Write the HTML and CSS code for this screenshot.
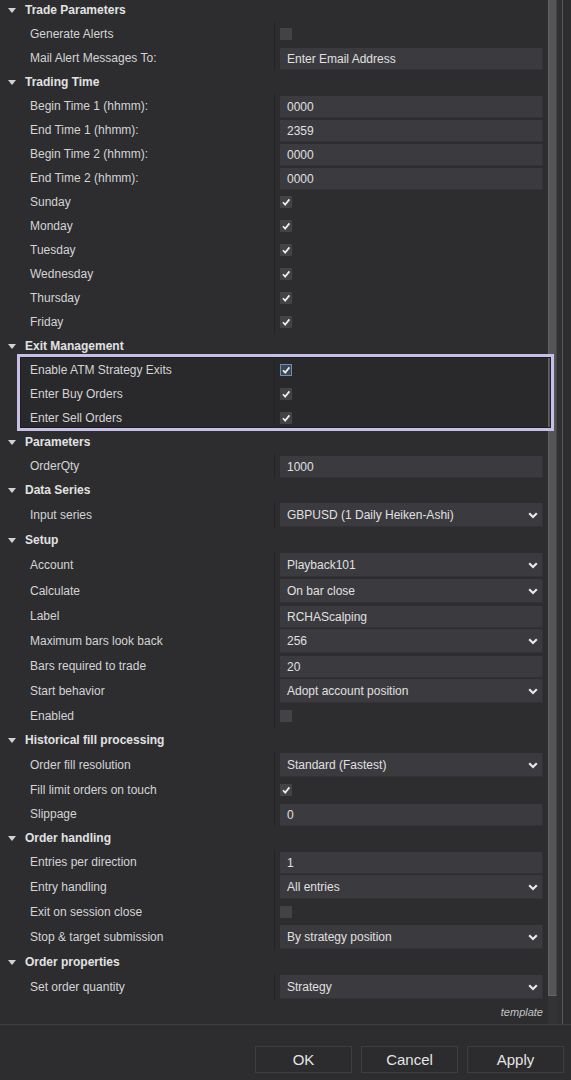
FILE: index.html
```html
<!DOCTYPE html>
<html>
<head>
<meta charset="utf-8">
<link rel="stylesheet" href="styles.css">
</head>
<body>
<div class="window">
  <div class="main">
    <div class="content">
      <div class="list">
        <div class="hdr"><span class="tri"></span>Trade Parameters</div>
        <div class="row"><div class="lbl">Generate Alerts</div><div class="val"><span class="cb"></span></div></div>
        <div class="row"><div class="lbl">Mail Alert Messages To:</div><div class="val"><div class="inp">Enter Email Address</div></div></div>

        <div class="hdr"><span class="tri"></span>Trading Time</div>
        <div class="row"><div class="lbl">Begin Time 1 (hhmm):</div><div class="val"><div class="inp">0000</div></div></div>
        <div class="row"><div class="lbl">End Time 1 (hhmm):</div><div class="val"><div class="inp">2359</div></div></div>
        <div class="row"><div class="lbl">Begin Time 2 (hhmm):</div><div class="val"><div class="inp">0000</div></div></div>
        <div class="row"><div class="lbl">End Time 2 (hhmm):</div><div class="val"><div class="inp">0000</div></div></div>
        <div class="row"><div class="lbl">Sunday</div><div class="val"><span class="cb"><svg viewBox="0 0 12 12"><path d="M3 6.2 L5.2 8.6 L9.4 3.4"/></svg></span></div></div>
        <div class="row"><div class="lbl">Monday</div><div class="val"><span class="cb"><svg viewBox="0 0 12 12"><path d="M3 6.2 L5.2 8.6 L9.4 3.4"/></svg></span></div></div>
        <div class="row"><div class="lbl">Tuesday</div><div class="val"><span class="cb"><svg viewBox="0 0 12 12"><path d="M3 6.2 L5.2 8.6 L9.4 3.4"/></svg></span></div></div>
        <div class="row"><div class="lbl">Wednesday</div><div class="val"><span class="cb"><svg viewBox="0 0 12 12"><path d="M3 6.2 L5.2 8.6 L9.4 3.4"/></svg></span></div></div>
        <div class="row"><div class="lbl">Thursday</div><div class="val"><span class="cb"><svg viewBox="0 0 12 12"><path d="M3 6.2 L5.2 8.6 L9.4 3.4"/></svg></span></div></div>
        <div class="row"><div class="lbl">Friday</div><div class="val"><span class="cb"><svg viewBox="0 0 12 12"><path d="M3 6.2 L5.2 8.6 L9.4 3.4"/></svg></span></div></div>

        <div class="hdr"><span class="tri"></span>Exit Management</div>
        <div class="highlight">
          <div class="row"><div class="lbl">Enable ATM Strategy Exits</div><div class="val"><span class="cb focus"><svg viewBox="0 0 12 12"><path d="M3 6.2 L5.2 8.6 L9.4 3.4"/></svg></span></div></div>
          <div class="row"><div class="lbl">Enter Buy Orders</div><div class="val"><span class="cb"><svg viewBox="0 0 12 12"><path d="M3 6.2 L5.2 8.6 L9.4 3.4"/></svg></span></div></div>
          <div class="row"><div class="lbl">Enter Sell Orders</div><div class="val"><span class="cb"><svg viewBox="0 0 12 12"><path d="M3 6.2 L5.2 8.6 L9.4 3.4"/></svg></span></div></div>
        </div>

        <div class="hdr"><span class="tri"></span>Parameters</div>
        <div class="row"><div class="lbl">OrderQty</div><div class="val"><div class="inp">1000</div></div></div>

        <div class="hdr"><span class="tri"></span>Data Series</div>
        <div class="row dd"><div class="lbl">Input series</div><div class="val"><div class="inp sel"><span>GBPUSD (1 Daily Heiken-Ashi)</span><svg class="chev" viewBox="0 0 10 7"><path d="M1.2 1.2 L5 5 L8.8 1.2"/></svg></div></div></div>

        <div class="hdr"><span class="tri"></span>Setup</div>
        <div class="row dd"><div class="lbl">Account</div><div class="val"><div class="inp sel"><span>Playback101</span><svg class="chev" viewBox="0 0 10 7"><path d="M1.2 1.2 L5 5 L8.8 1.2"/></svg></div></div></div>
        <div class="row dd"><div class="lbl">Calculate</div><div class="val"><div class="inp sel"><span>On bar close</span><svg class="chev" viewBox="0 0 10 7"><path d="M1.2 1.2 L5 5 L8.8 1.2"/></svg></div></div></div>
        <div class="row"><div class="lbl">Label</div><div class="val"><div class="inp">RCHAScalping</div></div></div>
        <div class="row dd"><div class="lbl">Maximum bars look back</div><div class="val"><div class="inp sel"><span>256</span><svg class="chev" viewBox="0 0 10 7"><path d="M1.2 1.2 L5 5 L8.8 1.2"/></svg></div></div></div>
        <div class="row"><div class="lbl">Bars required to trade</div><div class="val"><div class="inp">20</div></div></div>
        <div class="row dd"><div class="lbl">Start behavior</div><div class="val"><div class="inp sel"><span>Adopt account position</span><svg class="chev" viewBox="0 0 10 7"><path d="M1.2 1.2 L5 5 L8.8 1.2"/></svg></div></div></div>
        <div class="row"><div class="lbl">Enabled</div><div class="val"><span class="cb"></span></div></div>

        <div class="hdr"><span class="tri"></span>Historical fill processing</div>
        <div class="row dd"><div class="lbl">Order fill resolution</div><div class="val"><div class="inp sel"><span>Standard (Fastest)</span><svg class="chev" viewBox="0 0 10 7"><path d="M1.2 1.2 L5 5 L8.8 1.2"/></svg></div></div></div>
        <div class="row"><div class="lbl">Fill limit orders on touch</div><div class="val"><span class="cb"><svg viewBox="0 0 12 12"><path d="M3 6.2 L5.2 8.6 L9.4 3.4"/></svg></span></div></div>
        <div class="row"><div class="lbl">Slippage</div><div class="val"><div class="inp">0</div></div></div>

        <div class="hdr"><span class="tri"></span>Order handling</div>
        <div class="row"><div class="lbl">Entries per direction</div><div class="val"><div class="inp">1</div></div></div>
        <div class="row dd"><div class="lbl">Entry handling</div><div class="val"><div class="inp sel"><span>All entries</span><svg class="chev" viewBox="0 0 10 7"><path d="M1.2 1.2 L5 5 L8.8 1.2"/></svg></div></div></div>
        <div class="row"><div class="lbl">Exit on session close</div><div class="val"><span class="cb"></span></div></div>
        <div class="row dd"><div class="lbl">Stop &amp; target submission</div><div class="val"><div class="inp sel"><span>By strategy position</span><svg class="chev" viewBox="0 0 10 7"><path d="M1.2 1.2 L5 5 L8.8 1.2"/></svg></div></div></div>

        <div class="hdr"><span class="tri"></span>Order properties</div>
        <div class="row dd"><div class="lbl">Set order quantity</div><div class="val"><div class="inp sel"><span>Strategy</span><svg class="chev" viewBox="0 0 10 7"><path d="M1.2 1.2 L5 5 L8.8 1.2"/></svg></div></div></div>
      </div>
      <div class="template">template</div>
    </div>
    <div class="scroll">
      <div class="track"><div class="thumb"></div></div>
      <div class="gap"></div>
      <div class="edge"></div>
    </div>
  </div>
  <div class="footer">
    <button class="btn">OK</button>
    <button class="btn">Cancel</button>
    <button class="btn">Apply</button>
  </div>
</div>
</body>
</html>
```

FILE: styles.css
```css
* { box-sizing: border-box; }
html, body {
  margin: 0;
  padding: 0;
  background: #2d2d30;
}
body {
  width: 571px;
  height: 1080px;
  overflow: hidden;
  font-family: "Liberation Sans", Arial, sans-serif;
  font-size: 12px;
  color: #d6d6d6;
}
.window {
  display: flex;
  flex-direction: column;
  height: 1080px;
}
.main {
  display: flex;
  height: 1025px;
  border-bottom: 1px solid #3e3e41;
  overflow: hidden;
}
.content {
  width: 548px;
  display: flex;
  flex-direction: column;
}
.list {
  margin-top: -2px;
  display: flex;
  flex-direction: column;
}
.hdr {
  height: 24px;
  display: flex;
  align-items: center;
  font-weight: bold;
  color: #e2e2e2;
  padding-left: 8px;
}
.tri {
  width: 0;
  height: 0;
  border-left: 4px solid transparent;
  border-right: 4px solid transparent;
  border-top: 5px solid #d2d2d2;
  margin-right: 9px;
}
.row {
  height: 24px;
  display: grid;
  grid-template-columns: 275px 1fr;
}
.row.dd { height: 26px; }
.lbl {
  display: flex;
  align-items: center;
  padding-left: 30px;
  border-right: 1px solid #242426;
  color: #d4d4d4;
}
.val {
  display: flex;
  align-items: center;
  padding-left: 5px;
  padding-right: 5px;
}
.inp {
  flex: 1;
  height: 22px;
  margin-top: 1px;
  background: #3b3a3f;
  box-shadow: inset 0 -1px 0 #333237, inset -1px 0 0 #333237;
  display: flex;
  align-items: center;
  padding-left: 7px;
  color: #e0e0e0;
}
.row.dd .inp { height: 24px; margin-top: 0; }
.sel { justify-content: space-between; padding-right: 5px; }
.chev {
  width: 10px;
  height: 7px;
  fill: none;
  stroke: #e8e8e8;
  stroke-width: 2.2;
}
.cb {
  width: 12px;
  height: 12px;
  background: #434246;
  display: flex;
  align-items: center;
  justify-content: center;
}
.cb svg {
  width: 12px;
  height: 12px;
  fill: none;
  stroke: #ececec;
  stroke-width: 1.7;
}
.cb.focus {
  background: #3b4756;
  box-shadow: inset 0 0 0 1px #6f8fb0;
}
.highlight {
  position: relative;
  background: linear-gradient(to right, transparent 20px, #29292c 20px);
}
.highlight::after {
  content: "";
  position: absolute;
  top: -4px;
  bottom: -1px;
  left: 17px;
  right: -6px;
  border: 3px solid #c6bfe8;
  box-shadow: inset 0 0 0 1px #1f1f22;
  pointer-events: none;
  z-index: 2;
}
.template {
  height: 24px;
  display: flex;
  align-items: center;
  justify-content: flex-end;
  padding-right: 5px;
  font-style: italic;
  font-size: 11px;
  color: #c4c4c4;
}
.scroll {
  width: 23px;
  display: flex;
}
.track {
  width: 9px;
  background: #333336;
}
.thumb {
  height: 996px;
  background: #555558;
  border-left: 1px solid #626265;
  border-right: 1px solid #444447;
  border-bottom: 1px solid #646467;
}
.gap {
  width: 5px;
  background: #303033;
}
.edge {
  width: 1px;
  background: #58585b;
}
.footer {
  flex: 1;
  display: flex;
  justify-content: flex-end;
  align-items: flex-start;
  gap: 9px;
  padding-top: 21px;
  padding-right: 7px;
}
.btn {
  width: 97px;
  height: 27px;
  background: #2c2c2f;
  border: 1px solid #3e3e41;
  color: #e4e4e4;
  font-family: "Liberation Sans", Arial, sans-serif;
  font-size: 15px;
  padding: 0;
}
```
